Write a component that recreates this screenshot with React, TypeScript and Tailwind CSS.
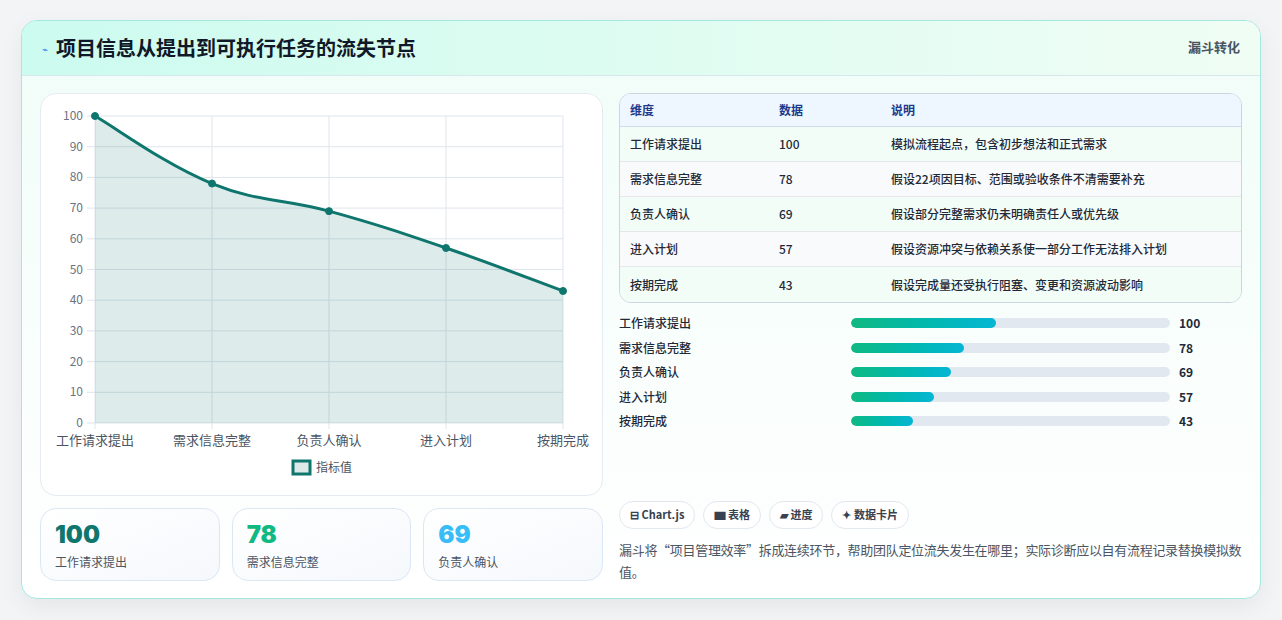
import React from "react";

const rows = [
  ["工作请求提出", 100, "模拟流程起点，包含初步想法和正式需求"],
  ["需求信息完整", 78, "假设22项因目标、范围或验收条件不清需要补充"],
  ["负责人确认", 69, "假设部分完整需求仍未明确责任人或优先级"],
  ["进入计划", 57, "假设资源冲突与依赖关系使一部分工作无法排入计划"],
  ["按期完成", 43, "假设完成量还受执行阻塞、变更和资源波动影响"],
] as const;

const font = { fontFamily: '"Noto Sans CJK SC", "Noto Sans", sans-serif' };

function Chart() {
  const xs = [54, 171, 288, 405, 522];
  const y = (v: number) => 329 - v * 3.07;
  const pts = rows.map((r, i) => [xs[i], y(r[1])] as [number, number]);
  let d = `M${pts[0][0]},${pts[0][1]}`;
  for (let i = 1; i < pts.length; i++) {
    const p0 = pts[i - 1], p1 = pts[i];
    const prev = pts[i - 2] || p0, next = pts[i + 1] || p1;
    const t = 0.2;
    const c1 = [p0[0] + (p1[0] - prev[0]) * t, p0[1] + (p1[1] - prev[1]) * t];
    const c2 = [p1[0] - (next[0] - p0[0]) * t, p1[1] - (next[1] - p0[1]) * t];
    d += ` C${c1[0]},${c1[1]} ${c2[0]},${c2[1]} ${p1[0]},${p1[1]}`;
  }
  return (
    <svg width="563" height="403" viewBox="0 0 563 403" style={font}>
      {Array.from({ length: 11 }, (_, i) => i * 10).map((v) => (
        <g key={v}>
          <line x1={46} x2={522} y1={y(v)} y2={y(v)} stroke="#dfe5ec" strokeWidth={1} />
          <text x={42} y={y(v) + 4} textAnchor="end" fontSize={12} fill="#6b7280">{v}</text>
        </g>
      ))}
      {xs.map((x) => (
        <line key={x} x1={x} x2={x} y1={22} y2={335} stroke="#dfe5ec" />
      ))}
      <path d={`${d} L522,329 L54,329 Z`} fill="rgba(15,118,110,0.14)" />
      <path d={d} fill="none" stroke="#0f766e" strokeWidth={3} />
      {pts.map(([x, yy], i) => (
        <circle key={i} cx={x} cy={yy} r={3.5} fill="#0f766e" stroke="#0f766e" />
      ))}
      {rows.map((r, i) => (
        <text key={i} x={xs[i]} y={351} textAnchor="middle" fontSize={13} fill="#4b5563">{r[0]}</text>
      ))}
      <rect x={252} y={367} width={17} height={13} fill="#dde9e8" stroke="#0f766e" strokeWidth={3} />
      <text x={275} y={378} fontSize={12} fill="#4b5563">指标值</text>
    </svg>
  );
}

export default function App() {
  return (
    <div className="w-[1282px] h-[620px] bg-[#f3f4f6] pt-5 px-[21px]" style={font}>
      <div className="w-[1240px] h-[579px] rounded-2xl border border-[#a5e8df] bg-gradient-to-b from-[#f0fdf8] to-white overflow-hidden shadow-[0_8px_24px_rgba(0,0,0,0.06)]">
        <div className="h-[55px] flex items-center justify-between px-5 bg-gradient-to-r from-[#ccfbef] to-[#f0fdf4] border-b border-[#d6e7ee]">
          <div className="flex items-center gap-2">
            <span className="text-[10px] text-[#3b82f6]">⌁</span>
            <span className="text-[20px] font-bold text-[#111827]">项目信息从提出到可执行任务的流失节点</span>
          </div>
          <span className="text-[13px] font-bold text-[#4b5563] self-start mt-4">漏斗转化</span>
        </div>
        <div className="flex gap-4 px-[18px] pt-[17px]">
          <div className="w-[563px] flex flex-col gap-3">
            <div className="h-[403px] rounded-2xl bg-white border border-[#e5ebf0]">
              <Chart />
            </div>
            <div className="grid grid-cols-3 gap-3">
              {[["100", "text-[#0f766e]", "工作请求提出"], ["78", "text-[#10b981]", "需求信息完整"], ["69", "text-[#38bdf8]", "负责人确认"]].map(([n, c, l]) => (
                <div key={l} className="h-[73px] rounded-2xl border border-[#dbe7f3] bg-gradient-to-br from-white to-[#f5f8fc] px-[14px] pt-[12px]">
                  <div className={`text-[24px] font-black leading-7 ${c}`} style={{ fontFamily: "Inter, sans-serif" }}>{n}</div>
                  <div className="text-[12px] text-[#4b5563] mt-1">{l}</div>
                </div>
              ))}
            </div>
          </div>
          <div className="flex-1">
            <div className="rounded-xl border border-[#cbd5e1] overflow-hidden bg-white">
              <div className="flex h-[33px] items-center bg-[#eef6ff] border-b border-[#cfdceb] text-[12px] font-bold text-[#1e3a8a]">
                <div className="w-[159px] pl-[10px]">维度</div>
                <div className="w-[112px]">数据</div>
                <div>说明</div>
              </div>
              {rows.map((r, i) => (
                <div key={i} className={`flex h-[35px] items-center text-[12px] font-medium text-[#1f2937] ${i < 4 ? "border-b border-[#e5e7eb]" : ""} ${i % 2 ? "bg-[#f8fafc]" : "bg-[#f2fdf8]"}`}>
                  <div className="w-[159px] pl-[10px]">{r[0]}</div>
                  <div className="w-[112px]">{r[1]}</div>
                  <div>{r[2]}</div>
                </div>
              ))}
            </div>
            <div className="mt-[8px] flex flex-col">
              {rows.map((r, i) => (
                <div key={i} className="flex items-center h-[24.5px] text-[12px] font-medium text-[#1f2937]">
                  <div className="w-[232px]">{r[0]}</div>
                  <div className="w-[319px] h-[10px] rounded-full bg-[#e2e8f0] overflow-hidden">
                    <div className="h-full rounded-full bg-gradient-to-r from-[#10b981] to-[#06b6d4]" style={{ width: `${r[1] * 0.455}%` }} />
                  </div>
                  <div className="ml-[9px] font-bold text-[12px]">{r[1]}</div>
                </div>
              ))}
            </div>
            <div className="mt-[67px] flex gap-2">
              {["⊟ Chart.js", "▆ 表格", "▰ 进度", "✦ 数据卡片"].map((t) => (
                <span key={t} className="h-[28px] px-[10px] flex items-center rounded-full border border-[#e2e8f0] bg-white text-[11px] font-semibold text-[#374151]">{t}</span>
              ))}
            </div>
            <p className="mt-[10px] text-[13px] leading-[22px] text-[#4b5563] tracking-[-0.3px]">漏斗将“项目管理效率”拆成连续环节，帮助团队定位流失发生在哪里；实际诊断应以自有流程记录替换模拟数值。</p>
          </div>
        </div>
      </div>
    </div>
  );
}
